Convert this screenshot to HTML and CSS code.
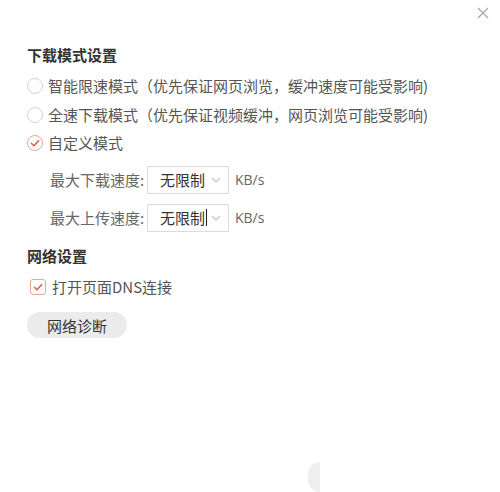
FILE: index.html
```html
<!DOCTYPE html>
<html lang="zh-CN">
<head>
  <meta charset="UTF-8">
  <title>下载设置</title>
  <link rel="stylesheet" href="styles.css">
</head>
<body>
  <div class="dialog">
    <!-- Title bar with close button -->
    <div class="title-bar">
      <span class="close" title="关闭">
        <svg width="12" height="12" viewBox="0 0 12 12">
          <path d="M1 1 L11 11 M11 1 L1 11" stroke="#a8a8a8" stroke-width="1.3" fill="none"/>
        </svg>
      </span>
    </div>

    <!-- Download mode -->
    <h2 class="section-title">下载模式设置</h2>
    <label class="option">
      <span class="radio"></span>
      <span>智能限速模式（优先保证网页浏览，缓冲速度可能受影响)</span>
    </label>
    <label class="option">
      <span class="radio"></span>
      <span>全速下载模式（优先保证视频缓冲，网页浏览可能受影响)</span>
    </label>
    <label class="option">
      <span class="radio checked">
        <svg width="10" height="8" viewBox="0 0 10 8">
          <path d="M1 4 L4 6.8 L9 1.2" stroke="#d8603c" stroke-width="1.5" fill="none"/>
        </svg>
      </span>
      <span>自定义模式</span>
    </label>

    <div class="speed-row first">
      <span class="speed-label">最大下载速度:</span>
      <div class="select">
        <span class="select-value">无限制</span>
        <svg class="chevron" width="10" height="6" viewBox="0 0 10 6">
          <path d="M1 1 L5 5 L9 1" stroke="#c4c4c4" stroke-width="1.2" fill="none"/>
        </svg>
      </div>
      <span class="unit">KB/s</span>
    </div>
    <div class="speed-row">
      <span class="speed-label">最大上传速度:</span>
      <div class="select">
        <span class="select-value">无限制<span class="caret"></span></span>
        <svg class="chevron" width="10" height="6" viewBox="0 0 10 6">
          <path d="M1 1 L5 5 L9 1" stroke="#c4c4c4" stroke-width="1.2" fill="none"/>
        </svg>
      </div>
      <span class="unit">KB/s</span>
    </div>

    <!-- Network -->
    <h2 class="section-title net">网络设置</h2>
    <label class="option check-option">
      <span class="checkbox">
        <svg width="10" height="8" viewBox="0 0 10 8">
          <path d="M1 4 L4 6.8 L9 1.2" stroke="#d8603c" stroke-width="1.5" fill="none"/>
        </svg>
      </span>
      <span>打开页面DNS连接</span>
    </label>
    <button class="diag-btn">网络诊断</button>

    <div class="scroll-blob"></div>
  </div>
</body>
</html>
```

FILE: styles.css
```css
body {
  margin: 0;
  background: #fff;
  font-family: "Noto Sans CJK SC", "Microsoft YaHei", sans-serif;
  font-size: 15px;
  color: #555;
}
.dialog {
  position: relative;
  width: 500px;
  height: 492px;
  padding-left: 27px;
  box-sizing: border-box;
  overflow: hidden;
}
.title-bar {
  display: flex;
  justify-content: flex-end;
  height: 45px;
  padding-right: 11px;
}
.close {
  display: flex;
  margin-top: 7px;
  height: 12px;
  cursor: pointer;
}
.section-title {
  margin: 0;
  font-size: 15px;
  line-height: 20px;
  font-weight: bold;
  color: #333;
}
.section-title.net {
  margin-top: 14px;
}
.option {
  display: flex;
  align-items: center;
  gap: 5px;
  height: 28.5px;
  line-height: 20px;
  color: #555;
}
.section-title + .option {
  margin-top: 7px;
}
.radio {
  display: flex;
  align-items: center;
  justify-content: center;
  width: 14px;
  height: 14px;
  border: 1px solid #d4d4d4;
  border-radius: 50%;
}
.radio.checked {
  border-color: #e6a898;
}
.speed-row {
  display: flex;
  align-items: center;
  height: 28px;
  margin-left: 23px;
  margin-top: 10px;
}
.speed-row.first {
  margin-top: 8px;
}
.speed-label {
  width: 97px;
  color: #666;
}
.select {
  display: flex;
  align-items: center;
  justify-content: space-between;
  width: 82px;
  height: 28px;
  box-sizing: border-box;
  padding: 0 7px 0 12px;
  border: 1px solid #dcdcdc;
  color: #333;
}
.select-value {
  display: flex;
  align-items: center;
}
.caret {
  display: inline-block;
  width: 1px;
  height: 17px;
  margin-left: 1px;
  background: #222;
}
.unit {
  margin-left: 6px;
  color: #666;
  font-family: "Open Sans", "Noto Sans", sans-serif;
  font-size: 14px;
}
.check-option {
  margin-left: 3px;
  gap: 6px;
}
.checkbox {
  display: flex;
  align-items: center;
  justify-content: center;
  width: 14px;
  height: 14px;
  border: 1px solid #e6a898;
  border-radius: 3px;
}
.diag-btn {
  display: block;
  width: 100px;
  height: 26px;
  margin-top: 11px;
  border: none;
  border-radius: 13px;
  background: #ebebeb;
  color: #333;
  font-family: inherit;
  font-size: 15px;
  cursor: pointer;
}
.scroll-blob {
  position: absolute;
  left: 308px;
  top: 462px;
  width: 12px;
  height: 30px;
  border-radius: 15px 0 0 15px;
  background: #efefef;
}
```
